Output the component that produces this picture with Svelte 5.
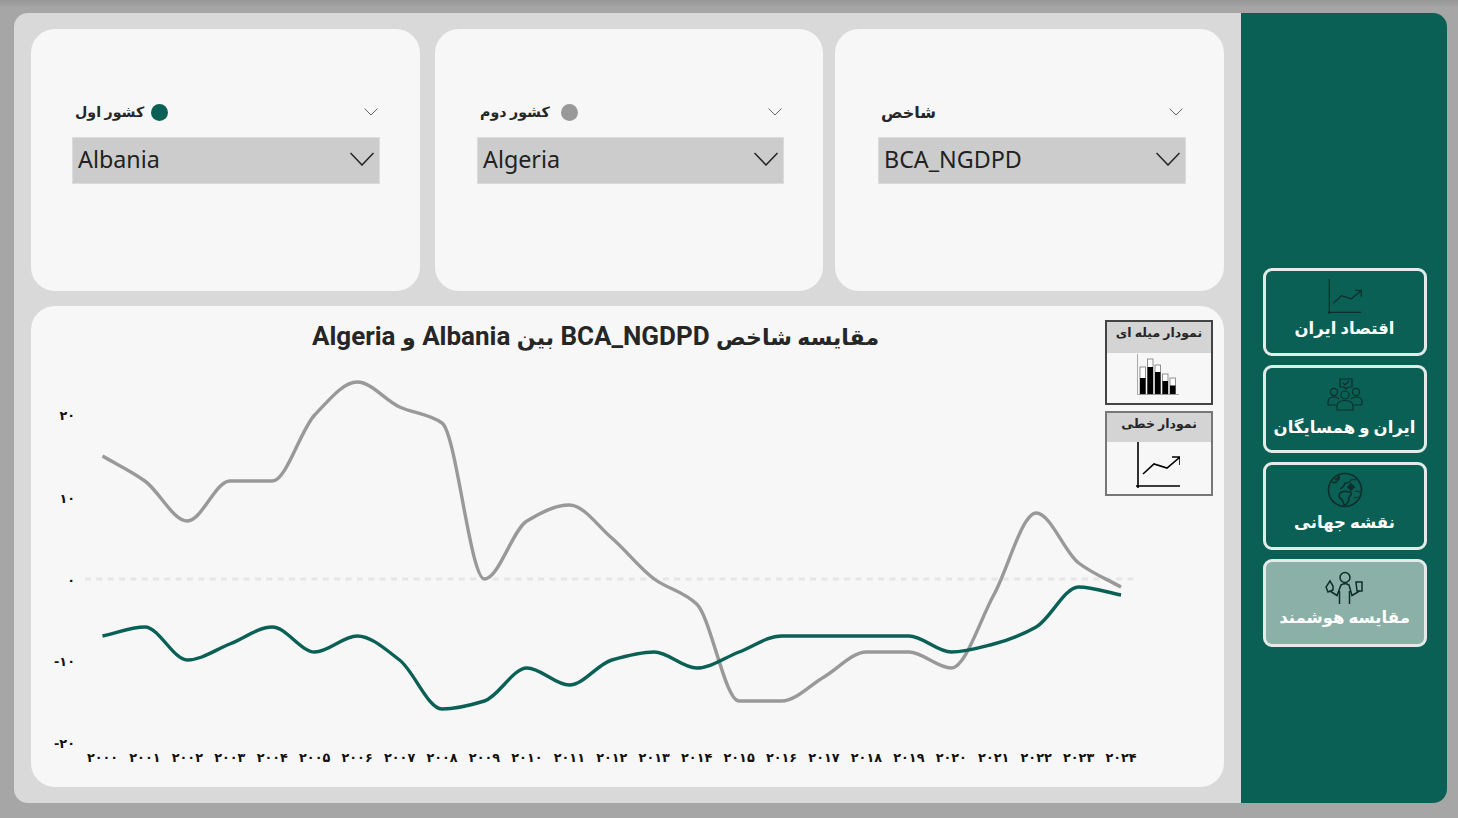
<script>
  const years = Array.from({ length: 25 }, (_, i) => 2000 + i);
  const grayY = [456, 481, 521, 481, 481, 415, 382, 407, 423, 579, 521, 505, 538, 579, 604, 701, 701, 677, 652, 652, 668, 595, 513, 563, 587];
  const tealY = [636, 627, 660, 644, 627, 652, 636, 660, 709, 701, 668, 685, 660, 652, 668, 652, 636, 636, 636, 636, 652, 644, 627, 587, 595];
  const yTicks = [
    { label: "۲۰", y: 415 },
    { label: "۱۰", y: 498 },
    { label: "۰", y: 580 },
    { label: "-۱۰", y: 661 },
    { label: "-۲۰", y: 743 },
  ];
  const fa = (n) => String(n).replace(/\d/g, (d) => "۰۱۲۳۴۵۶۷۸۹"[d]);

  // svg starts at page x 31, y 360
  const px = (i) => 102.5 + i * 42.44 - 31;
  const py = (y) => y - 360;

  // monotone cubic, same look as the smoothed lines of the report
  function smooth(ys) {
    const pts = ys.map((y, i) => [px(i), py(y)]);
    const h = pts[1][0] - pts[0][0];
    const m = pts.slice(1).map((p, i) => (p[1] - pts[i][1]) / h);
    const t = pts.map((_, i) => {
      if (i === 0) return m[0];
      if (i === pts.length - 1) return m[m.length - 1];
      return m[i - 1] * m[i] <= 0 ? 0 : (2 * m[i - 1] * m[i]) / (m[i - 1] + m[i]);
    });
    let d = `M${pts[0][0]} ${pts[0][1]}`;
    for (let i = 1; i < pts.length; i++) {
      const a = pts[i - 1], b = pts[i];
      d += `C${a[0] + h / 3} ${a[1] + (t[i - 1] * h) / 3} ${b[0] - h / 3} ${b[1] - (t[i] * h) / 3} ${b[0]} ${b[1]}`;
    }
    return d;
  }

  const bars = [
    { x: 3, top: 13, fill: 28 },
    { x: 10.5, top: 5, fill: 17 },
    { x: 18, top: 11, fill: 22 },
    { x: 25.5, top: 20, fill: 31 },
    { x: 33, top: 24, fill: 35.5 },
  ];
  const filters = [
    { label: "کشور اول", dot: "#0a6055", value: "Albania", cls: "first" },
    { label: "کشور دوم", dot: "#999999", value: "Algeria", cls: "second" },
    { label: "شاخص", dot: null, value: "BCA_NGDPD", cls: "third" },
  ];
</script>

{#snippet lineIcon(w, h)}
  <svg width={w} height={h} viewBox="0 0 44 46" fill="none" stroke="currentColor" stroke-width="1.6">
    <path d="M2 0V46M0 44H44" />
    <path d="M7 32L18 22L31 26L44 15M36 15H44V23" />
  </svg>
{/snippet}

<div class="page">
  <div class="left">
    <div class="filters">
      {#each filters as f}
        <section class="card filter {f.cls}">
          <div class="head">
            <span class="label">
              <span>{f.label}</span>
              {#if f.dot}<i class="dot" style="background:{f.dot}"></i>{/if}
            </span>
            <svg class="small" width="14" height="8" viewBox="0 0 14 8" fill="none" stroke="#666" stroke-width="1">
              <path d="M.5 .5L7 7L13.5 .5" />
            </svg>
          </div>
          <div class="select">
            <span>{f.value}</span>
            <svg width="24" height="14" viewBox="0 0 24 14" fill="none" stroke="#222" stroke-width="1.5">
              <path d="M.5 1L12 13L23.5 1" />
            </svg>
          </div>
        </section>
      {/each}
    </div>

    <section class="card chart">
      <h1><span class="fa">مقایسه شاخص</span> BCA_NGDPD <span class="fa">بین</span> Albania <span class="fa">و</span> Algeria</h1>
      <svg class="plot" viewBox="0 0 1193 427">
        <path d="M54 {py(579)}H1106" stroke="#e6e6e6" stroke-width="3" stroke-dasharray="6 5.33" fill="none" />
        <path d={smooth(grayY)} stroke="#999999" stroke-width="3.4" fill="none" />
        <path d={smooth(tealY)} stroke="#0a6055" stroke-width="3.4" fill="none" />
        {#each yTicks as t}
          <text class="tick" x="44" y={py(t.y) + 5} text-anchor="end" direction="ltr">{t.label}</text>
        {/each}
        {#each years as year, i}
          <text class="tick" x={px(i)} y={py(762)} text-anchor="middle">{fa(year)}</text>
        {/each}
      </svg>

      <button class="kind bar">
        <span class="kind-title">نمودار میله ای</span>
        <svg width="42" height="42" viewBox="0 0 42 42">
          <path d="M.5 0V40.5H42" stroke="#aaa" fill="none" />
          {#each bars as b}
            <rect x={b.x} y={b.top} width="5.5" height={40 - b.top} fill="#fff" stroke="#777" stroke-width=".8" />
            <rect x={b.x} y={b.fill - 4} width="5.5" height={44 - b.fill} fill="#000" />
          {/each}
        </svg>
      </button>
      <button class="kind line">
        <span class="kind-title">نمودار خطی</span>
        {@render lineIcon(44, 46)}
      </button>
    </section>
  </div>

  <nav class="side">
    <button class="nav">
      <span class="ico">{@render lineIcon(37, 35)}</span>
      <span class="txt">اقتصاد ایران</span>
    </button>
    <button class="nav">
      <span class="ico">
        <svg width="36" height="33" viewBox="0 0 36 33" fill="none" stroke="currentColor" stroke-width="1.2">
          <path d="M13 1H25V9H21L19 11L17 9H13Z" />
          <path d="M16 5L18 7L22 3" />
          <circle cx="7" cy="14" r="3.6" />
          <circle cx="29" cy="14" r="3.6" />
          <circle cx="18" cy="17" r="4" />
          <path d="M1 27V24Q1 19 7 19Q10 19 12 21" />
          <path d="M35 27V24Q35 19 29 19Q26 19 24 21" />
          <path d="M1 27H9M35 27H27" />
          <path d="M10 32V28Q10 22.500 18 22.500Q26 22.500 26 28V32Z" />
        </svg>
      </span>
      <span class="txt">ایران و همسایگان</span>
    </button>
    <button class="nav">
      <span class="ico">
        <svg width="36" height="36" viewBox="0 0 36 36" fill="none" stroke="currentColor" stroke-width="1.6">
          <circle cx="18" cy="18" r="16.500" />
          <path d="M5 10Q9 12 11 8Q14 5 10 3M8 8L12 5" />
          <path d="M13 17Q17 15 18 11Q22 12 24 8Q27 7 29 8" stroke-width="1.2" />
          <path d="M13 21Q17 18 21 20Q25 19 24 23Q21 25 22 28Q20 33 17 33Q16 28 14 27Q11 25 13 21Z" />
          <path d="M21 15L24 12L27 15L24 18Z" fill="currentColor" />
          <path d="M28 19L33 20M27 26L31 25" stroke-width="1.2" />
        </svg>
      </span>
      <span class="txt">نقشه جهانی</span>
    </button>
    <button class="nav active">
      <span class="ico">
        <svg width="40" height="34" viewBox="0 0 40 34" fill="none" stroke="currentColor" stroke-width="1.5">
          <circle cx="20" cy="6.500" r="5" />
          <path d="M5 20L12 24.500L16 14Q20 11.500 24 14L27 24.500L34.500 20" />
          <path d="M14.500 20V33M24.500 20V33" />
          <path d="M3 21L1 16L5 10L8 15L8 19Z" />
          <path d="M31 11H37V20H32Z" />
        </svg>
      </span>
      <span class="txt">مقایسه هوشمند</span>
    </button>
  </nav>
</div>

<style>
  :global(body) {
    margin: 0;
    background: linear-gradient(#979797, #a6a6a6 8px);
    font-family: Roboto, "DejaVu Sans", sans-serif;
  }

  .page {
    display: flex;
    box-sizing: border-box;
    width: 1458px;
    height: 818px;
    padding: 13px 11px 15px 14px;
  }

  .left {
    display: flex;
    flex-direction: column;
    gap: 15px;
    width: 1227px;
    box-sizing: border-box;
    padding: 16px 17px;
    background: #d9d9d9;
    border-radius: 14px 0 0 14px;
  }

  .card {
    background: #f7f7f7;
    border-radius: 24px;
  }

  .filters {
    display: flex;
    height: 262px;
  }

  .filter {
    box-sizing: border-box;
    width: 389px;
    padding: 72px 40px 0 41px;
  }
  .filter.second {
    width: 388px;
    margin: 0 12px 0 15px;
    padding-left: 42px;
    padding-right: 39px;
  }
  .filter.third {
    padding-left: 43px;
    padding-right: 38px;
  }

  .head {
    display: flex;
    align-items: center;
    justify-content: space-between;
    height: 22px;
    margin-bottom: 14px;
  }

  .label {
    display: flex;
    align-items: center;
    gap: 7px;
    padding-left: 3px;
    font-size: 14.200px;
    font-weight: 700;
    color: #262626;
  }
  .second .label {
    gap: 11px;
  }
  .third .label {
    font-size: 16px;
  }

  .dot {
    width: 17px;
    height: 17px;
    border-radius: 50%;
  }

  .small {
    margin-right: 2px;
  }
  .third .small {
    margin-right: 3px;
  }

  .select {
    display: flex;
    align-items: center;
    justify-content: space-between;
    height: 47px;
    box-sizing: border-box;
    padding: 0 5px 4px;
    background: #cccccc;
    border: 1px solid #dcdcdc;
    font-family: "Noto Sans", sans-serif;
    font-size: 23.300px;
    color: #222;
  }

  .chart {
    position: relative;
    flex: 1;
    display: flex;
    flex-direction: column;
  }

  h1 {
    height: 54px;
    margin: 0;
    box-sizing: border-box;
    padding: 14px 0 0 0;
    width: 1129px;
    direction: rtl;
    text-align: center;
    font-size: 26px;
    line-height: 32px;
    font-weight: 700;
    color: #262626;
  }
  .fa {
    font-size: 22px;
  }

  .plot {
    display: block;
    width: 1193px;
    height: 427px;
  }

  .tick {
    font-family: "DejaVu Sans", sans-serif;
    font-size: 12.800px;
    font-weight: 700;
    fill: #111;
  }

  .kind {
    position: absolute;
    left: 1074px;
    display: flex;
    flex-direction: column;
    align-items: center;
    width: 108px;
    height: 85px;
    box-sizing: border-box;
    padding: 0;
    background: #f7f7f7;
    border: 2px solid #444;
    color: #000;
    font-family: inherit;
  }
  .kind.bar {
    top: 14px;
  }
  .kind.line {
    top: 105px;
    border-color: #777;
  }

  .kind-title {
    width: 100%;
    height: 31px;
    margin-bottom: 1px;
    line-height: 22px;
    background: #d4d4d4;
    font-size: 12.500px;
    font-weight: 700;
    color: #262626;
  }
  .line .kind-title {
    height: 29px;
    margin-bottom: 0;
  }
  .kind svg {
    margin-right: 2px;
  }

  .side {
    display: flex;
    flex-direction: column;
    align-items: center;
    gap: 9px;
    box-sizing: border-box;
    width: 206px;
    padding: 255px 0 0 1px;
    background: #0a6055;
    border-radius: 0 14px 14px 0;
  }

  .nav {
    display: flex;
    flex-direction: column;
    align-items: center;
    justify-content: flex-start;
    gap: 3px;
    width: 164px;
    height: 88px;
    box-sizing: border-box;
    padding: 7px 0 0;
    background: transparent;
    border: 3px solid #e3ebe9;
    border-radius: 9px;
    font-family: inherit;
    font-size: 16.500px;
    font-weight: 700;
    color: #fff;
  }
  .nav.active {
    background: #8bb0a8;
  }

  .ico {
    display: flex;
    align-items: flex-end;
    height: 36px;
    color: #0e2e2b;
  }

  .txt {
    line-height: 24px;
  }
  .nav:nth-child(2) .txt {
    margin-top: 2px;
  }
  .nav:nth-child(4) .txt {
    margin-top: -2px;
  }
</style>
